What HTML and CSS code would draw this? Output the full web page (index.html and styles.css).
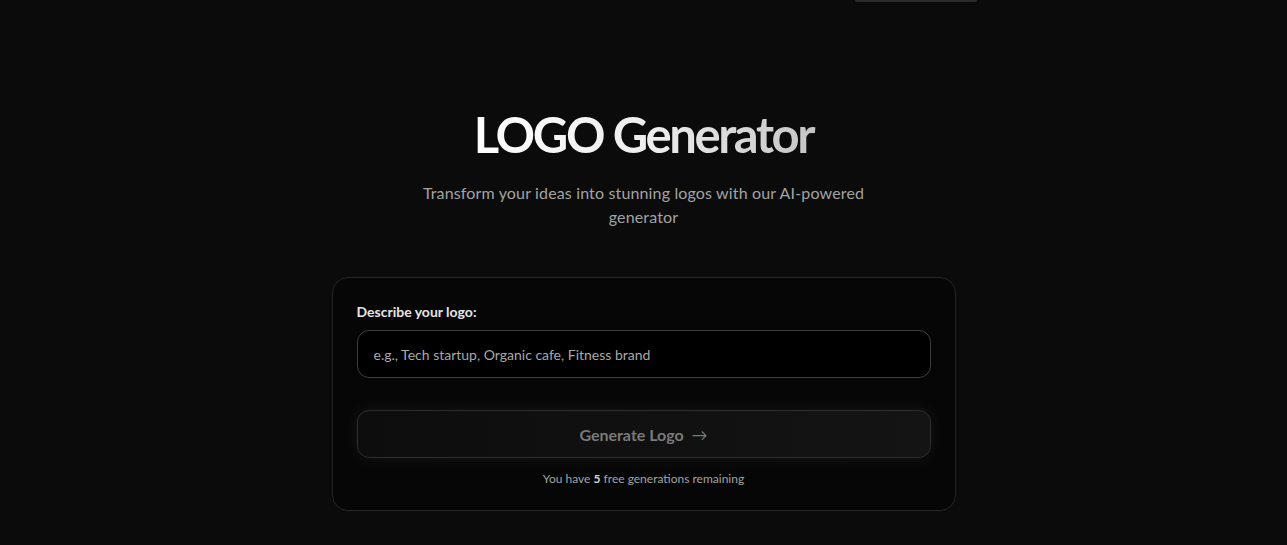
FILE: index.html
```html
<!DOCTYPE html>
<html lang="en">
<head>
<meta charset="utf-8">
<title>LOGO Generator</title>
<link rel="stylesheet" href="styles.css">
</head>
<body>
<header class="topbar">
  <div class="topbar-spacer"></div>
  <div class="top-pill"></div>
</header>
<main class="main">
  <section class="hero">
    <h1 class="title">LOGO Generator</h1>
    <p class="subtitle">Transform your ideas into stunning logos with our AI-powered generator</p>
  </section>
  <section class="card">
    <label class="label" for="desc">Describe your logo:</label>
    <input id="desc" class="input" type="text" placeholder="e.g., Tech startup, Organic cafe, Fitness brand">
    <button class="btn" type="button">Generate Logo <span class="arrow">→</span></button>
    <p class="remaining">You have <strong>5</strong> free generations remaining</p>
  </section>
</main>
</body>
</html>
```

FILE: styles.css
```css
* { box-sizing: border-box; }
html, body { margin: 0; padding: 0; }
body {
  background: #0b0b0b;
  font-family: "Lato", "Noto Sans", sans-serif;
  color: #e5e5e5;
  height: 545px;
  overflow: hidden;
}
.topbar {
  display: flex;
  justify-content: center;
  height: 2px;
}
.topbar-spacer { width: 544px; }
.top-pill {
  width: 122px;
  height: 2px;
  background: #2b2b2b;
  border-radius: 0 0 8px 8px;
}
.main {
  display: flex;
  flex-direction: column;
  align-items: center;
}
.hero {
  display: flex;
  flex-direction: column;
  align-items: center;
  padding-top: 98px;
}
.title {
  margin: 4px 0 0;
  font-size: 49px;
  line-height: 60px;
  font-weight: 700;
  letter-spacing: -2.4px;
  padding: 0 4px;
  background: linear-gradient(90deg, #ffffff 0%, #ececec 55%, #c4c4c4 100%);
  -webkit-background-clip: text;
  background-clip: text;
  color: transparent;
}
.subtitle {
  margin: 17px 0 0;
  max-width: 448px;
  text-align: center;
  font-size: 16px;
  line-height: 24px;
  letter-spacing: 0.15px;
  color: #a3a3a3;
}
.card {
  margin-top: 48px;
  width: 624px;
  background: #060606;
  border: 1px solid #262626;
  border-radius: 16px;
  padding: 24px 24px 22px;
  display: flex;
  flex-direction: column;
}
.label {
  font-size: 14px;
  font-weight: 700;
  color: #e5e5e5;
  line-height: 20px;
  margin-bottom: 8px;
}
.input {
  height: 48px;
  background: #000;
  border: 1px solid #3d3d3d;
  border-radius: 12px;
  padding: 0 16px;
  font-family: inherit;
  font-size: 14px;
  color: #e5e5e5;
  outline: none;
}
.input::placeholder { color: #a8a8a8; }
.btn {
  margin-top: 32px;
  height: 48px;
  background: linear-gradient(90deg, #0d0d0d, #141414);
  border: 1px solid #2e2e2e;
  border-radius: 12px;
  font-family: inherit;
  font-size: 16px;
  font-weight: 700;
  color: #7a7a7a;
  box-shadow: 0 0 18px rgba(255,255,255,0.07);
  cursor: pointer;
}
.arrow { font-weight: 400; margin-left: 4px; }
.remaining {
  margin: 12px 0 0;
  text-align: center;
  font-size: 12px;
  line-height: 18px;
  color: #a3a3a3;
}
.remaining strong { color: #d4d4d4; }
```
